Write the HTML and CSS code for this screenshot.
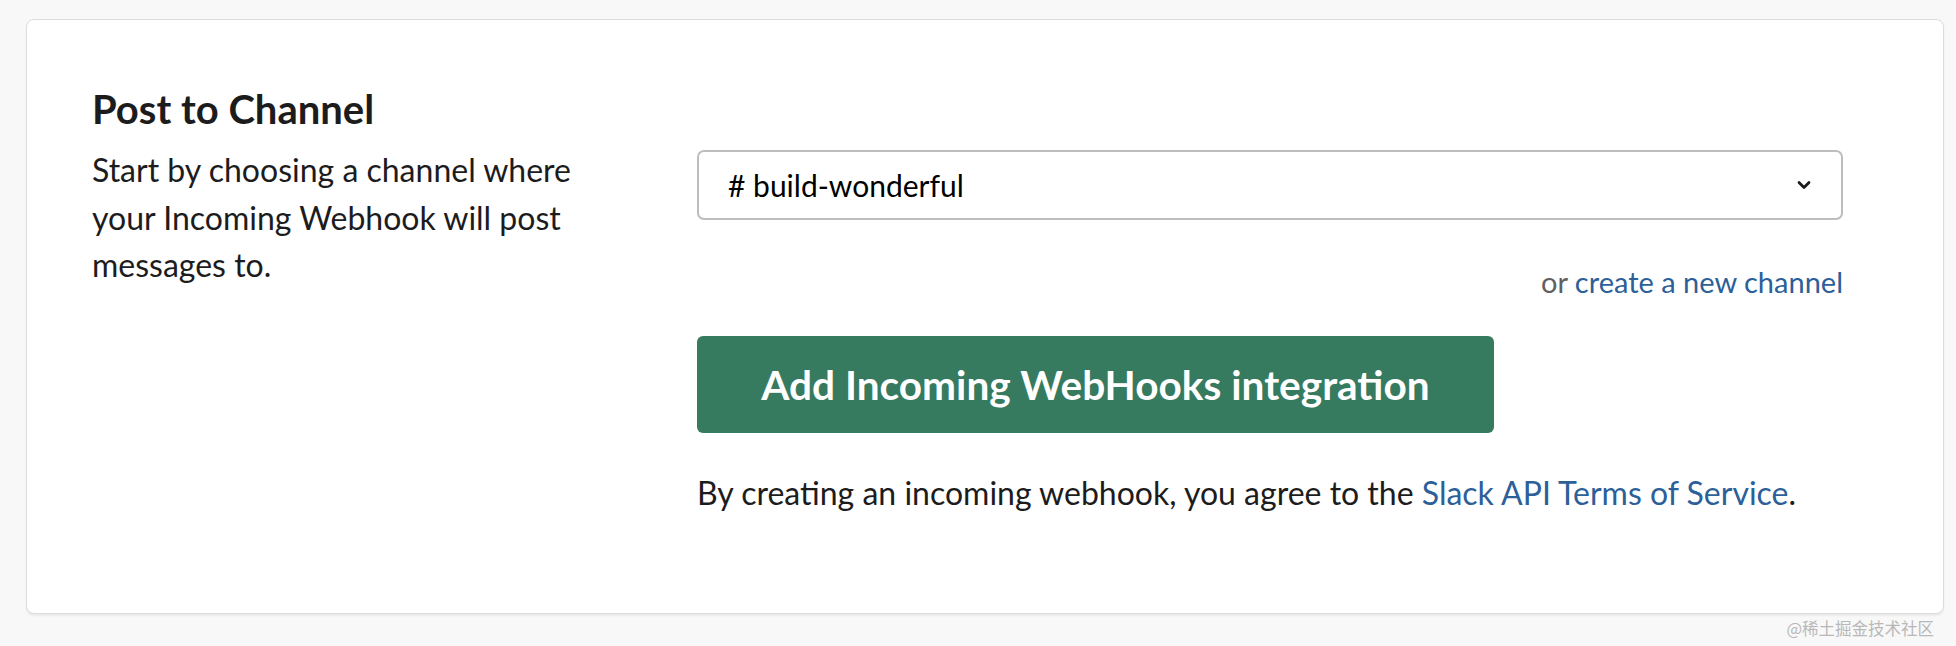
FILE: index.html
```html
<!DOCTYPE html>
<html lang="en">
<head>
<meta charset="utf-8">
<title>Post to Channel</title>
<link rel="stylesheet" href="styles.css">
</head>
<body>
<div class="page">
  <section class="card">
    <div class="intro">
      <h2 class="title">Post to Channel</h2>
      <p class="lead">Start by choosing a channel where your Incoming Webhook will post messages to.</p>
    </div>
    <div class="form">
      <div class="select">
        <span class="select-value"># build-wonderful</span>
        <svg class="chevron" viewBox="0 0 14 10" width="14" height="10" aria-hidden="true"><path d="M2 2.5 L7 7.5 L12 2.5" fill="none" stroke="#1d1c1d" stroke-width="2.8" stroke-linecap="round" stroke-linejoin="round"/></svg>
      </div>
      <p class="alt">or <a class="link" href="#">create a new channel</a></p>
      <button class="btn" type="button">Add Incoming WebHooks integration</button>
      <p class="terms">By creating an incoming webhook, you agree to the <a class="link" href="#">Slack API Terms of Service</a>.</p>
    </div>
  </section>
  <div class="watermark">@稀土掘金技术社区</div>
</div>
</body>
</html>
```

FILE: styles.css
```css
html, body {
  margin: 0;
  padding: 0;
  background: #f8f8f8;
}

body {
  font-family: Lato, "Noto Sans", sans-serif;
  color: #1d1c1d;
}

.page {
  position: relative;
  width: 1956px;
  height: 646px;
  padding: 19px 12px 0 26px;
  box-sizing: border-box;
}

.card {
  display: flex;
  background: #fff;
  border: 1px solid #dcdcdc;
  border-radius: 8px;
  box-shadow: 0 2px 2px rgba(0, 0, 0, 0.06);
  height: 595px;
  box-sizing: border-box;
  padding: 65px 0 0 65px;
}

.intro {
  width: 605px;
  flex: none;
}

.title {
  margin: 0;
  font-size: 40px;
  font-weight: 700;
  line-height: 1.2;
}

.lead {
  margin: 13px 0 0;
  width: 480px;
  font-size: 32px;
  line-height: 47.5px;
}

.form {
  width: 1146px;
  flex: none;
  display: flex;
  flex-direction: column;
  margin-top: 65px;
}

.select {
  height: 70px;
  box-sizing: border-box;
  border: 2px solid #bdbdbd;
  border-radius: 7px;
  display: flex;
  align-items: center;
  justify-content: space-between;
  padding: 0 30px 0 29px;
}

.select-value {
  font-size: 30px;
  color: #000;
}

.chevron {
  display: block;
}

.alt {
  margin: 44px 0 0;
  text-align: right;
  font-size: 29px;
  line-height: 36px;
  color: #616061;
}

.link {
  color: #2d5f99;
  text-decoration: none;
}

.btn {
  margin-top: 36px;
  align-self: flex-start;
  width: 797px;
  height: 97px;
  border: none;
  border-radius: 6px;
  background: #367a5f;
  color: #fff;
  font-family: Lato, "Noto Sans", sans-serif;
  font-size: 40.6px;
  font-weight: 700;
  padding: 0;
}

.terms {
  margin: 41px 0 0;
  font-size: 32px;
  line-height: 1.2;
}

.watermark {
  position: absolute;
  right: 22px;
  bottom: 6px;
  font-family: "Noto Sans CJK SC", sans-serif;
  font-size: 16.5px;
  color: #b8b8b8;
}
```
